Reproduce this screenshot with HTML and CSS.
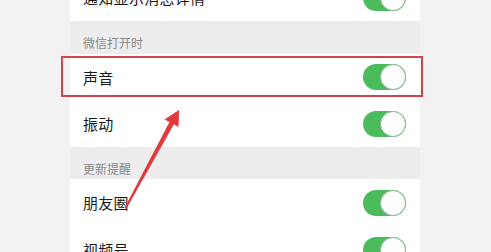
FILE: index.html
```html
<!DOCTYPE html>
<html lang="zh">
<head>
<meta charset="utf-8">
<link rel="stylesheet" href="styles.css">
</head>
<body>
<div class="page">
  <div class="list">
    <div class="row"><span class="label">通知显示消息详情</span><span class="toggle"><span class="knob"></span></span></div>
    <div class="section">微信打开时</div>
    <div class="row highlight"><span class="label">声音</span><span class="toggle"><span class="knob"></span></span><span class="mark"></span></div>
    <div class="row"><span class="label">振动</span><span class="toggle"><span class="knob"></span></span></div>
    <div class="section s2">更新提醒</div>
    <div class="row"><span class="label">朋友圈</span><span class="toggle"><span class="knob"></span></span></div>
    <div class="row"><span class="label">视频号</span><span class="toggle"><span class="knob"></span></span></div>
  </div>
  <svg class="arrow" width="491" height="252" viewBox="0 0 491 252">
    <polygon points="124.5,208 169.5,121.9 164.5,119.5 179,110 178.5,127 173.9,124.3 126.5,208.5" fill="#e5383d"/>
  </svg>
</div>
</body>
</html>
```
FILE: styles.css
```css
html, body {
  margin: 0;
  padding: 0;
}
body {
  background: #f2f2f2;
  font-family: "Noto Sans CJK SC", "Noto Sans", sans-serif;
  width: 491px;
  height: 252px;
  overflow: hidden;
}
.page {
  position: relative;
  width: 491px;
  height: 252px;
  overflow: hidden;
}
.list {
  width: 350px;
  margin-left: 70px;
  margin-top: -26px;
  display: flex;
  flex-direction: column;
}
.row {
  position: relative;
  height: 47px;
  background: #ffffff;
  display: flex;
  align-items: center;
  justify-content: space-between;
  padding: 0 14px 0 13px;
  box-sizing: border-box;
}
.row.highlight {
  height: 46px;
}
.label {
  font-size: 15px;
  color: #1a1a1a;
  letter-spacing: 0.3px;
}
.section {
  height: 33px;
  background: #ededed;
  box-sizing: border-box;
  padding: 14px 0 0 13px;
  font-size: 12px;
  line-height: 16px;
  color: #8a8a8a;
}
.section.s2 {
  height: 32px;
}
.toggle {
  position: relative;
  width: 43px;
  height: 26px;
  border-radius: 13px;
  background: #4cbb5c;
  display: flex;
  justify-content: flex-end;
}
.knob {
  width: 24px;
  height: 24px;
  margin-top: 0;
  border-radius: 50%;
  background: #ffffff;
  border: 1px solid #8fb89a;
}
.mark {
  position: absolute;
  left: -9px;
  top: 2px;
  width: 362px;
  height: 41px;
  box-sizing: border-box;
  border: 2px solid #d2444d;
  pointer-events: none;
}
.arrow {
  position: absolute;
  left: 0;
  top: 0;
}
```
